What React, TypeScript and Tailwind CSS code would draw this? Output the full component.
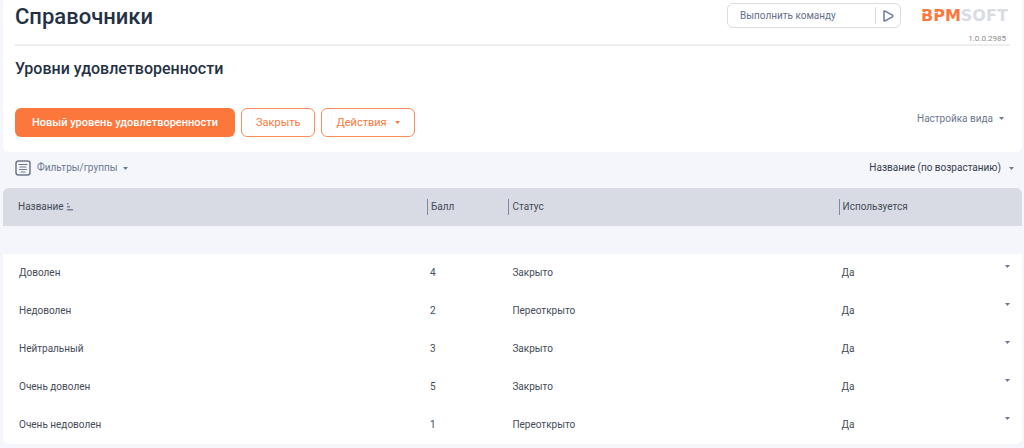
import React from "react";

type Row = { name: string; score: number; status: string; used: string };

const rows: Row[] = [
  { name: "Доволен", score: 4, status: "Закрыто", used: "Да" },
  { name: "Недоволен", score: 2, status: "Переоткрыто", used: "Да" },
  { name: "Нейтральный", score: 3, status: "Закрыто", used: "Да" },
  { name: "Очень доволен", score: 5, status: "Закрыто", used: "Да" },
  { name: "Очень недоволен", score: 1, status: "Переоткрыто", used: "Да" },
];

function Caret() {
  return (
    <svg width="5" height="3" viewBox="0 0 5 3" fill="currentColor" aria-hidden="true">
      <path d="M0 0h5L2.5 3z" />
    </svg>
  );
}

function Logo() {
  return (
    <svg
      width="89"
      height="22"
      viewBox="0 0 89 22"
      role="img"
      aria-label="BPMSoft"
      className="font-['DejaVu_Sans','Liberation_Sans',sans-serif] text-[16px] font-bold"
    >
      <text x="0" y="16" fill="#fb773c">
        BPM
        <tspan fill="#d9dce5">SOFT</tspan>
      </text>
      <path d="M0 7.6h4M12 7.6h4" stroke="#ffffff" strokeWidth="1" />
    </svg>
  );
}

function CommandLine() {
  return (
    <form
      className="flex h-[25px] w-[174px] items-center rounded-md border border-[#d9dce3] bg-white"
      onSubmit={(e) => e.preventDefault()}
    >
      <input
        type="text"
        aria-label="Выполнить команду"
        placeholder="Выполнить команду"
        className="h-full min-w-0 flex-1 bg-transparent pl-3 text-[10px] text-[#64708a] outline-none placeholder:text-[#64708a]"
      />
      <button
        type="submit"
        aria-label="Запустить"
        className="flex h-[17px] w-[25px] items-center justify-center border-l border-[#d9dce3] text-[#6c7a98]"
      >
        <svg width="11" height="12" viewBox="0 0 11 12" fill="none" stroke="currentColor" strokeWidth="1.5" strokeLinejoin="round">
          <path d="M1 1.6Q1 .6 2 1.1L9.4 5.2Q10.4 6 9.4 6.8L2 10.9Q1 11.4 1 10.4z" />
        </svg>
      </button>
    </form>
  );
}

function HeaderCell({ children }: { children: React.ReactNode }) {
  return (
    <th scope="col" className="bg-[#d8dbe3] p-0 font-normal last:rounded-tr-md">
      <div className="flex h-4 items-center border-l border-[#7f8ba3] pl-[3px]">{children}</div>
    </th>
  );
}

export default function App() {
  return (
    <div className="min-h-screen bg-[#f5f6fb] pr-0.5 pb-1 pl-[3px] font-[Roboto,'Noto_Sans',sans-serif] text-[10px] leading-4 text-[#444b57]">
      <header className="rounded-b-md bg-white px-3 pb-[15px]">
        <div className="flex h-[46px] items-start justify-between border-b-2 border-[#eeeef0]">
          <h1 className="pt-[3px] text-[22px] leading-7 font-medium text-[#253143]">Справочники</h1>
          <div className="flex gap-5 pt-[3px]">
            <CommandLine />
            <div className="flex flex-col items-end pt-0.5">
              <Logo />
              <span className="pt-1 pr-1 text-[8px] leading-4 text-[#8b8b8b]">1.0.0.2985</span>
            </div>
          </div>
        </div>
        <h2 className="pt-[11px] text-base leading-6 font-medium text-[#253143]">Уровни удовлетворенности</h2>
        <div className="flex items-center justify-between pt-[27px]">
          <div className="flex gap-1.5 text-[11px]">
            <button type="button" className="h-[29px] rounded-md bg-[#fb773c] px-[17px] font-medium text-white">
              Новый уровень удовлетворенности
            </button>
            <button type="button" className="h-[29px] rounded-md border border-[#fb8d5c] px-3.5 text-[#fb773c]">
              Закрыть
            </button>
            <button type="button" className="flex h-[29px] items-center gap-2 rounded-md border border-[#fb8d5c] px-3.5 text-[#fb773c]">
              Действия
              <Caret />
            </button>
          </div>
          <button type="button" className="mr-1.5 flex items-center gap-1.5 pb-2 text-[#6c7890]">
            Настройка вида
            <Caret />
          </button>
        </div>
      </header>

      <main>
        <div className="flex h-9 items-center justify-between pr-2 pb-1 pl-3">
          <button type="button" className="flex items-center gap-1.5 text-[#6c7890]">
            <svg width="16" height="16" viewBox="0 0 16 16" fill="none" stroke="currentColor" strokeWidth="1.5" strokeLinecap="round">
              <rect x="1" y="1" width="14" height="14" rx="2.5" />
              <path d="M4 4.5h8M5 7h6M4.5 9.5h7M6 12h4" strokeWidth="1.2" />
            </svg>
            Фильтры/группы
            <Caret />
          </button>
          <button type="button" className="flex items-center gap-2 text-[#353d4e]">
            Название (по возрастанию)
            <span className="text-[#6c7890]">
              <Caret />
            </span>
          </button>
        </div>

        <table className="w-full table-fixed border-separate border-spacing-0 text-left">
          <colgroup>
            <col className="w-[41.6%]" />
            <col className="w-[8%]" />
            <col className="w-[32.4%]" />
            <col />
          </colgroup>
          <thead>
            <tr className="h-[38px]">
              <th scope="col" aria-sort="ascending" className="rounded-tl-md bg-[#d8dbe3] p-0 pl-[15px] font-normal">
                <div className="flex items-center gap-[3px]">
                  Название
                  <svg width="6" height="8" viewBox="0 0 6 8" fill="#7482a0" aria-hidden="true">
                    <path d="M0 0h1.5v1.5H0zM0 3h3v1.5H0zM0 6h6v1.5H0z" />
                  </svg>
                </div>
              </th>
              <HeaderCell>Балл</HeaderCell>
              <HeaderCell>Статус</HeaderCell>
              <HeaderCell>Используется</HeaderCell>
            </tr>
          </thead>
          <tbody className="before:block before:h-7">
            {rows.map((row) => (
              <tr key={row.name} className="group h-[38px]">
                <td className="bg-white p-0 pl-4 group-last:rounded-bl-md">{row.name}</td>
                <td className="bg-white p-0 pl-[3px]">{row.score}</td>
                <td className="bg-white p-0 pl-1">{row.status}</td>
                <td className="bg-white p-0 pl-[3px] group-last:rounded-br-md">
                  <div className="flex items-start justify-between pr-3">
                    {row.used}
                    <button type="button" aria-label={"Действия: " + row.name} className="text-[#6c7890]">
                      <Caret />
                    </button>
                  </div>
                </td>
              </tr>
            ))}
          </tbody>
        </table>
      </main>
    </div>
  );
}
